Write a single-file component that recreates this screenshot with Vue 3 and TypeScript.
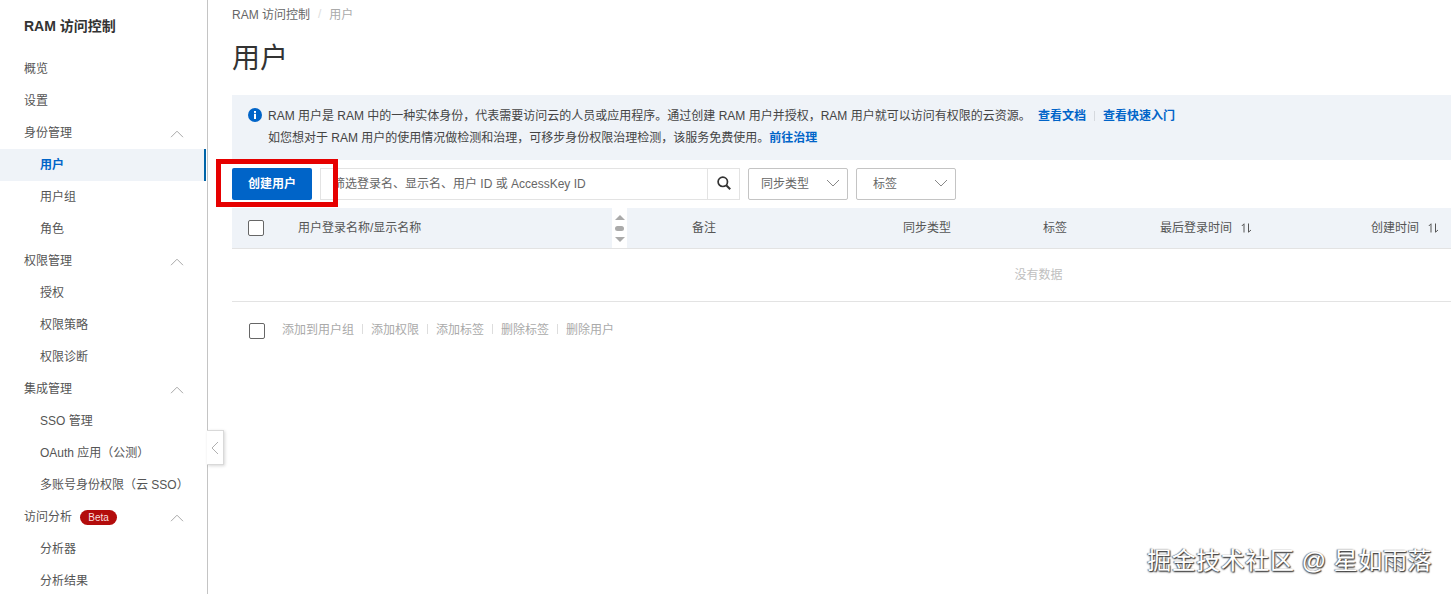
<script setup lang="ts">
interface MenuItem { label: string; level: 1 | 2; active?: boolean; chevron?: boolean; badge?: string }
const menu: MenuItem[] = [
  { label: '概览', level: 1 },
  { label: '设置', level: 1 },
  { label: '身份管理', level: 1, chevron: true },
  { label: '用户', level: 2, active: true },
  { label: '用户组', level: 2 },
  { label: '角色', level: 2 },
  { label: '权限管理', level: 1, chevron: true },
  { label: '授权', level: 2 },
  { label: '权限策略', level: 2 },
  { label: '权限诊断', level: 2 },
  { label: '集成管理', level: 1, chevron: true },
  { label: 'SSO 管理', level: 2 },
  { label: 'OAuth 应用（公测）', level: 2 },
  { label: '多账号身份权限（云 SSO）', level: 2 },
  { label: '访问分析', level: 1, chevron: true, badge: 'Beta' },
  { label: '分析器', level: 2 },
  { label: '分析结果', level: 2 },
]
const bulk = ['添加到用户组', '添加权限', '添加标签', '删除标签', '删除用户']
</script>

<template>
  <div class="page">
    <aside class="sidebar">
      <div class="brand">RAM 访问控制</div>
      <nav class="menu">
        <div
          v-for="item in menu"
          :key="item.label"
          class="menu-item"
          :class="[item.level === 2 ? 'sub' : 'top', { active: item.active }]"
        >
          <span>{{ item.label }}</span>
          <span v-if="item.badge" class="badge">{{ item.badge }}</span>
          <svg v-if="item.chevron" class="chev" width="14" height="8" viewBox="0 0 14 8">
            <path d="M1 7.2 7 1.2l6 6" fill="none" stroke="#a8a8a8" stroke-width="1" />
          </svg>
        </div>
      </nav>
      <div class="collapse">
        <svg width="8" height="14" viewBox="0 0 8 14">
          <path d="M7 1 1 7l6 6" fill="none" stroke="#b0b0b0" stroke-width="1" />
        </svg>
      </div>
    </aside>

    <main class="main">
      <div class="crumbs">
        <span class="crumb">RAM 访问控制</span>
        <span class="slash">/</span>
        <span class="crumb-current">用户</span>
      </div>
      <h1 class="title">用户</h1>

      <div class="alert">
        <svg class="info" width="14" height="14" viewBox="0 0 14 14">
          <circle cx="7" cy="7" r="7" fill="#0064c8" />
          <rect x="6" y="5.8" width="2" height="5.2" fill="#fff" />
          <rect x="6" y="3" width="2" height="1.9" fill="#fff" />
        </svg>
        <div class="alert-text">
          <div class="alert-line">
            RAM 用户是 RAM 中的一种实体身份，代表需要访问云的人员或应用程序。通过创建 RAM 用户并授权，RAM 用户就可以访问有权限的云资源。
            <a class="link first">查看文档</a><i class="sep"></i><a class="link">查看快速入门</a>
          </div>
          <div class="alert-line">如您想对于 RAM 用户的使用情况做检测和治理，可移步身份权限治理检测，该服务免费使用。<a class="link">前往治理</a></div>
        </div>
      </div>

      <div class="toolbar">
        <button class="primary">创建用户</button>
        <div class="search">
          <span class="placeholder">筛选登录名、显示名、用户 ID 或 AccessKey ID</span>
          <span class="search-btn">
            <svg width="16" height="16" viewBox="0 0 16 16">
              <circle cx="6.8" cy="6.8" r="4.7" fill="none" stroke="#333" stroke-width="1.7" />
              <path d="m10.2 10.2 4 4" stroke="#333" stroke-width="2" fill="none" />
            </svg>
          </span>
        </div>
        <div class="select"><span class="select-label">同步类型</span>
          <svg width="14" height="8" viewBox="0 0 14 8"><path d="m1 1 6 6 6-6" fill="none" stroke="#888" stroke-width="1" /></svg>
        </div>
        <div class="select tag"><span class="select-label">标签</span>
          <svg width="14" height="8" viewBox="0 0 14 8"><path d="m1 1 6 6 6-6" fill="none" stroke="#888" stroke-width="1" /></svg>
        </div>
      </div>

      <div class="thead">
        <span class="check-cell"><i class="check"></i></span>
        <span class="th">用户登录名称/显示名称</span>
        <span class="handle">
          <i class="up"></i><i class="pill"></i><i class="down"></i>
        </span>
        <span></span>
        <span class="th">备注</span>
        <span class="th">同步类型</span>
        <span class="th">标签</span>
        <span class="th sortable">最后登录时间
          <svg width="11" height="10" viewBox="0 0 11 10"><path d="M3 9.5V.8L.8 3M7.5.5v8.7L10 7" fill="none" stroke="#555" stroke-width="1" /></svg>
        </span>
        <span class="th sortable">创建时间
          <svg width="11" height="10" viewBox="0 0 11 10"><path d="M3 9.5V.8L.8 3M7.5.5v8.7L10 7" fill="none" stroke="#555" stroke-width="1" /></svg>
        </span>
      </div>
      <div class="empty">没有数据</div>

      <div class="bulk">
        <i class="check"></i>
        <div class="bulk-actions">
          <span v-for="b in bulk" :key="b" class="bulk-item">{{ b }}</span>
        </div>
      </div>

      <div class="highlight"></div>
    </main>

    <div class="watermark">掘金技术社区 @ 星如雨落</div>
  </div>
</template>

<style>
html, body { margin: 0; background: #fff; overflow: hidden; }
</style>

<style scoped>
.page {
  display: flex;
  width: 1451px;
  height: 594px;
  overflow: hidden;
  position: relative;
  font-family: "Liberation Sans", "Noto Sans CJK SC", sans-serif;
  font-size: 12px;
  color: #555;
}
.sidebar {
  width: 207px;
  flex: none;
  border-right: 1px solid #c4c4c4;
  position: relative;
}
.brand {
  font-size: 14px;
  font-weight: 700;
  color: #333;
  padding: 17px 0 0 24px;
  height: 36px;
  line-height: 18px;
}
.menu-item {
  height: 32px;
  display: flex;
  align-items: center;
  position: relative;
  box-sizing: border-box;
  padding-bottom: 4px;
  color: #555;
}
.menu-item.top { padding-left: 24px; }
.menu-item.sub { padding-left: 40px; }
.menu-item.active {
  background: #eff3f8;
  color: #0064c8;
  font-weight: 700;
  margin-right: 1px;
  border-right: 2px solid #0064a8;
}
.chev { position: absolute; left: 170px; top: 13px; }
.badge {
  margin-left: 8px;
  margin-top: 4px;
  background: #b30c0c;
  color: #f8dcdc;
  font-size: 10px;
  line-height: 15px;
  height: 15px;
  width: 37px;
  border-radius: 8px;
  text-align: center;
}
.collapse {
  position: absolute;
  left: 207px;
  top: 430px;
  width: 16px;
  height: 33px;
  background: #fff;
  border: 1px solid #d9d9d9;
  border-left: none;
  box-shadow: 1px 1px 3px rgba(0, 0, 0, 0.16);
  display: flex;
  align-items: center;
  justify-content: center;
  z-index: 2;
}
.main {
  flex: 1;
  min-width: 0;
  padding-left: 24px;
  position: relative;
}
.crumbs {
  height: 29px;
  box-sizing: border-box;
  padding-bottom: 2px;
  display: flex;
  align-items: center;
  gap: 6px;
  color: #666;
}
.slash { color: #ddd; margin: 0 2px; }
.crumb-current { color: #aaa; }
.title {
  margin: 0;
  height: 66px;
  font-size: 28px;
  font-weight: 400;
  line-height: 60px;
  color: #333;
}
.alert {
  height: 65px;
  background: #eff3f8;
  display: flex;
  padding: 10px 0 0 16px;
  box-sizing: border-box;
  gap: 6px;
}
.info { margin-top: 3px; flex: none; }
.alert-line {
  line-height: 22px;
  height: 22px;
  color: #444;
  white-space: nowrap;
}
.link { color: #0064c8; font-weight: 700; }
.link.first { margin-left: 4px; }
.sep {
  display: inline-block;
  width: 1px;
  height: 10px;
  background: #d5d9de;
  margin: 0 8px;
  vertical-align: -1px;
}
.toolbar {
  display: flex;
  margin-top: 8px;
  height: 32px;
}
.primary {
  width: 80px;
  height: 32px;
  border: none;
  border-radius: 2px;
  background: #0064c8;
  color: #fff;
  font: 700 12px "Liberation Sans", "Noto Sans CJK SC", sans-serif;
  padding: 0 0 4px;
}
.search {
  margin-left: 8px;
  width: 420px;
  height: 32px;
  box-sizing: border-box;
  border: 1px solid #e3e3e3;
  display: flex;
  align-items: center;
  justify-content: space-between;
  padding-left: 12px;
  color: #666;
}
.placeholder, .select-label { padding-bottom: 4px; }
.search-btn {
  width: 32px;
  height: 30px;
  box-sizing: border-box;
  border-left: 1px solid #e3e3e3;
  display: flex;
  align-items: center;
  justify-content: center;
}
.search-btn svg { margin-top: -2px; }
.select {
  margin-left: 8px;
  width: 100px;
  height: 32px;
  box-sizing: border-box;
  border: 1px solid #c4c4c4;
  border-radius: 2px;
  display: flex;
  align-items: center;
  justify-content: space-between;
  padding: 0 7px 0 12px;
  color: #666;
}
.select svg { margin-top: -2px; }
.select.tag { padding-left: 16px; }
.thead {
  margin-top: 8px;
  height: 41px;
  box-sizing: border-box;
  background: #eff3f8;
  border-bottom: 1px solid #e3e3e3;
  display: grid;
  grid-template-columns: 66px 314px 15px 65px 211px 140px 117px 211px 1fr;
  align-items: center;
  color: #555;
}
.th { padding-bottom: 4px; }
.check-cell { padding-left: 16px; display: flex; }
.check {
  display: block;
  width: 14px;
  height: 14px;
  border: 1px solid #666;
  border-radius: 2px;
  background: #fff;
  flex: none;
}
.handle {
  background: #fff;
  height: 40px;
  display: flex;
  flex-direction: column;
  align-items: center;
  justify-content: center;
  gap: 6px;
}
.up, .down { width: 0; height: 0; border: 5px solid transparent; }
.up { border-bottom: 5px solid #aaa; border-top: 0; }
.down { border-top: 5px solid #aaa; border-bottom: 0; }
.pill { width: 9px; height: 5px; border-radius: 3px; background: #aaa; }
.sortable { white-space: nowrap; }
.sortable svg { margin-left: 6px; vertical-align: -1px; }
.empty {
  height: 48px;
  padding: 0 0 4px 394px;
  border-bottom: 1px solid #e3e3e3;
  display: flex;
  align-items: center;
  justify-content: center;
  color: #c0c0c0;
}
.bulk {
  margin-top: 21px;
  padding-left: 17px;
  display: flex;
  align-items: center;
  height: 16px;
}
.bulk-actions { display: flex; margin-left: 17px; margin-top: -5px; }
.bulk-item { color: #aaa; }
.bulk-item + .bulk-item {
  margin-left: 8px;
  padding-left: 9px;
  background: linear-gradient(#ddd, #ddd) left center / 1px 10px no-repeat;
}
.highlight {
  position: absolute;
  left: 8px;
  top: 159px;
  width: 122px;
  height: 48px;
  box-sizing: border-box;
  border: 5px solid #e60000;
}
.watermark {
  position: absolute;
  right: 19px;
  top: 546px;
  font-size: 24px;
  line-height: 30px;
  color: #fff;
  letter-spacing: 0.55px;
  text-shadow: 1px 1px 1px #444, -1px 0 1px #777, 0 1px 2px #555;
}
</style>
